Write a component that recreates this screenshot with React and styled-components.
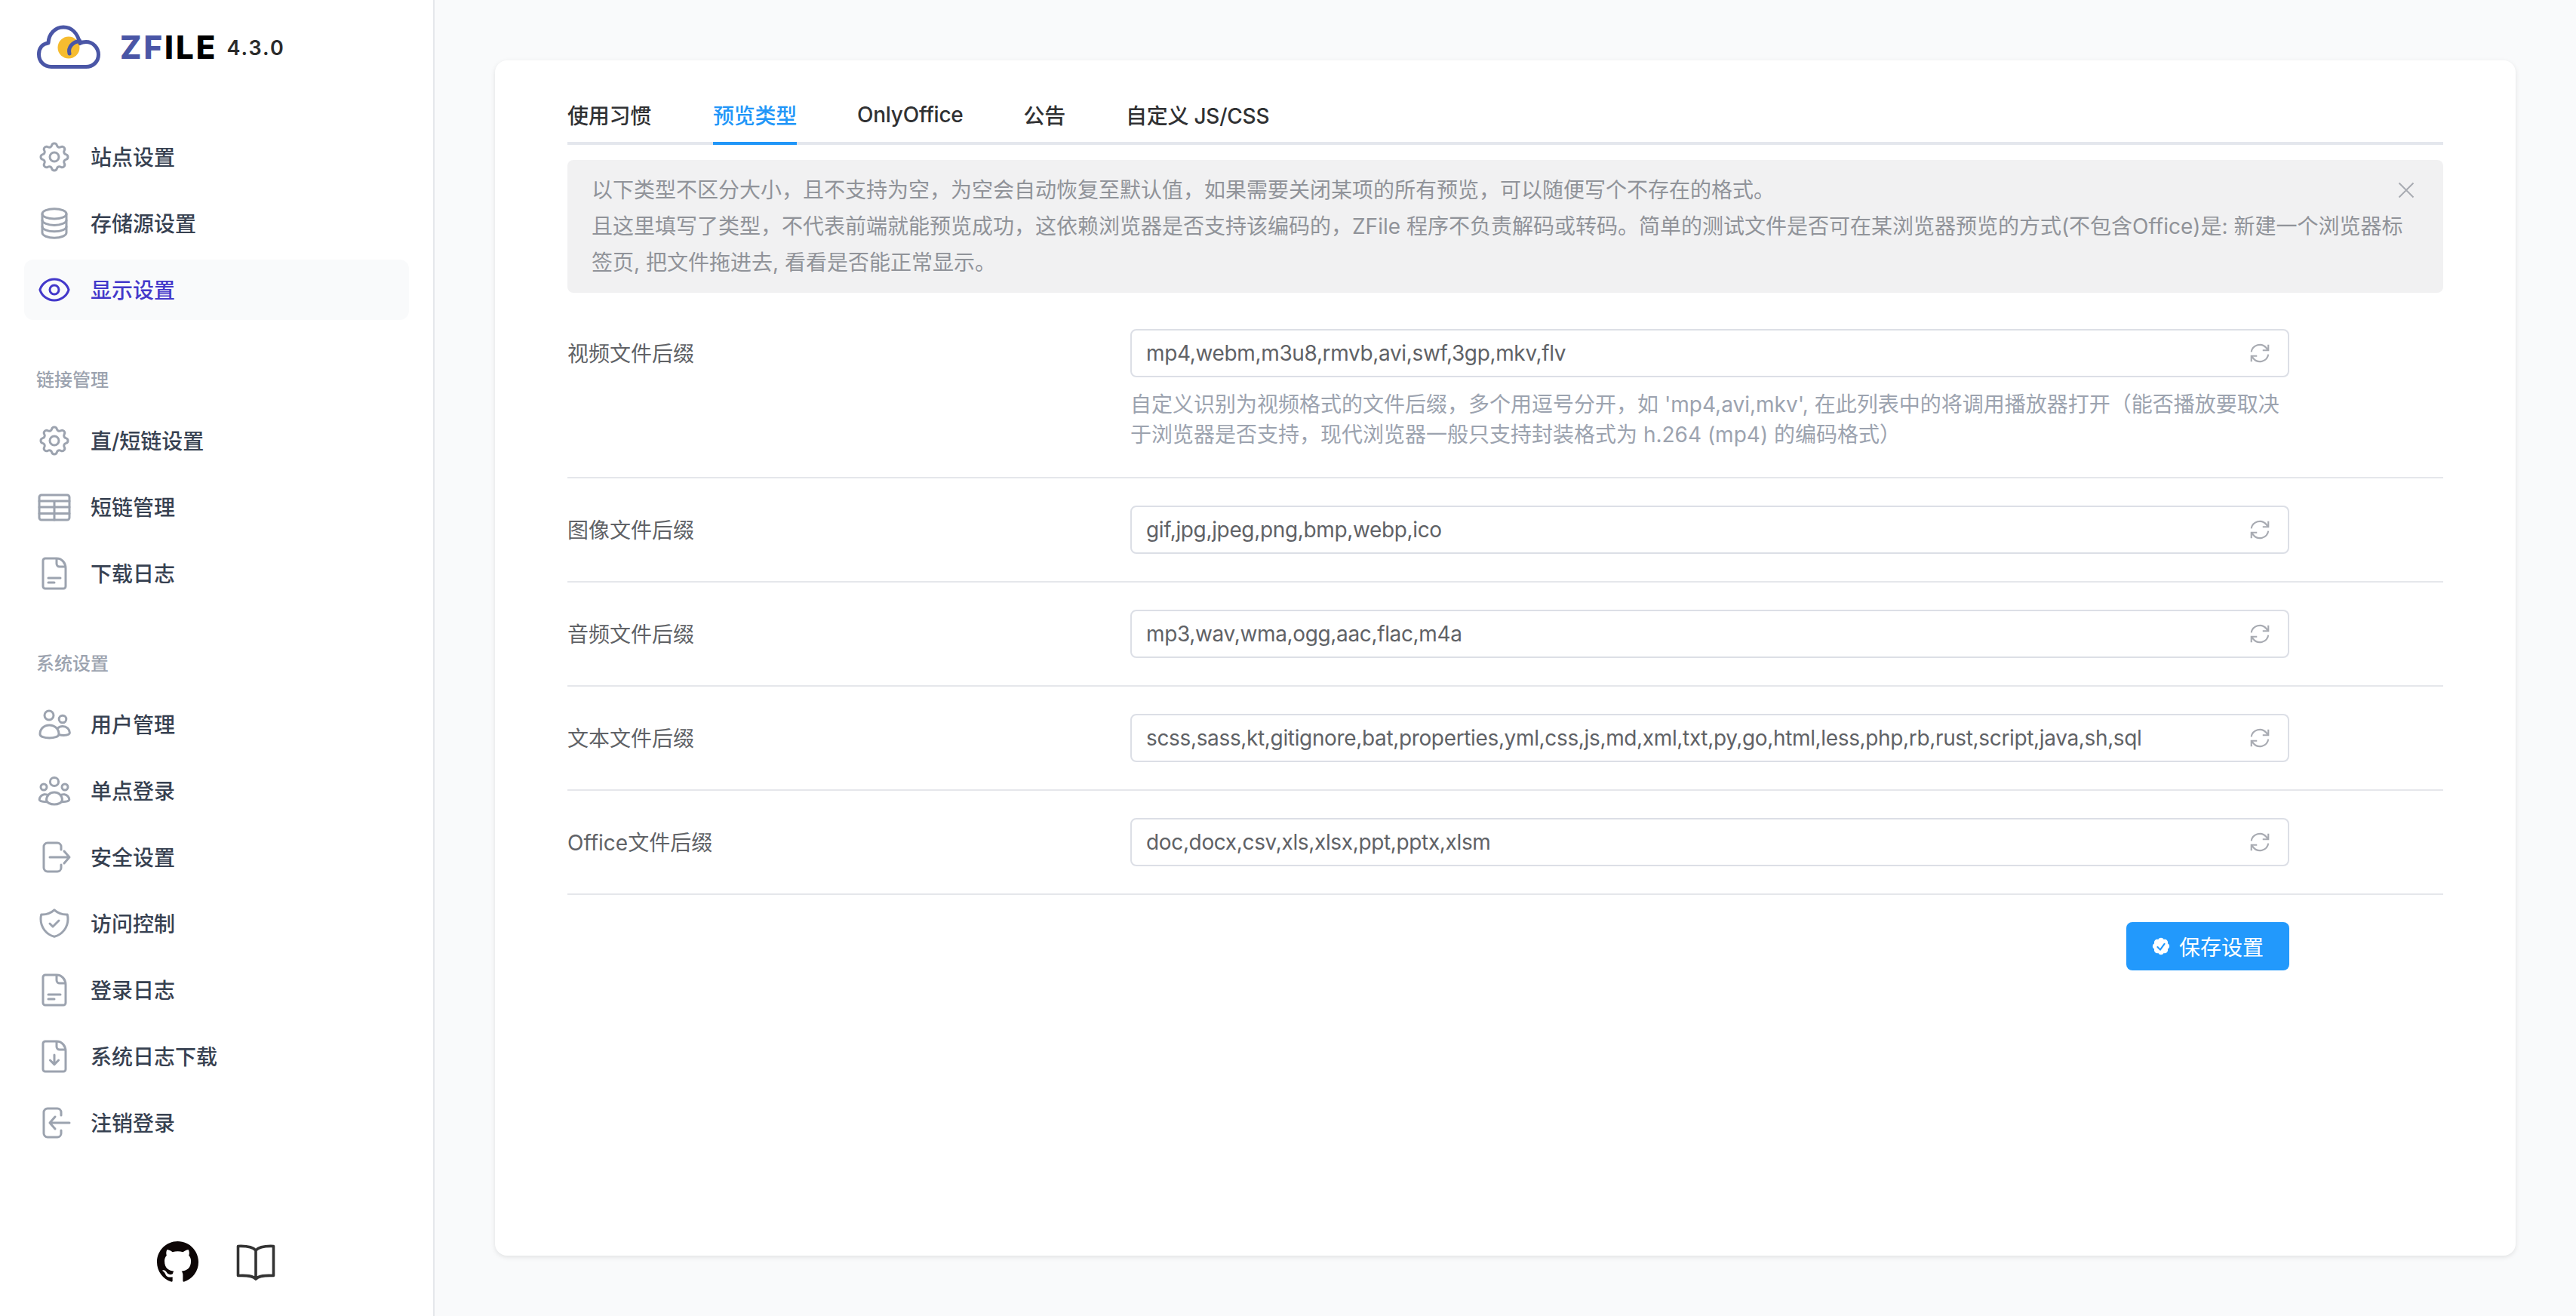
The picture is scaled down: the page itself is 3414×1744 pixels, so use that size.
import React from "react";
import styled, { createGlobalStyle } from "styled-components";
import { BsGithub } from "react-icons/bs";

const GlobalStyle = createGlobalStyle`
  html, body {
    margin: 0;
    padding: 0;
    height: 100%;
  }
  body {
    font-family: Inter, "Noto Sans CJK SC", sans-serif;
    background: #f9fafb;
  }
  * {
    box-sizing: border-box;
  }
`;

const FONT = `Inter, "Noto Sans CJK SC", sans-serif`;

// Icons, all on a 24 grid
const Icon = ({ children }) => (
  <NavSvg viewBox="0 0 24 24" fill="none" stroke="currentColor" strokeWidth="1.5" strokeLinecap="round" strokeLinejoin="round">
    {children}
  </NavSvg>
);

const CogIcon = () => (
  <Icon>
    <path d="M10.325 4.317c.426-1.756 2.924-1.756 3.35 0a1.724 1.724 0 002.573 1.066c1.543-.94 3.31.826 2.37 2.37a1.724 1.724 0 001.065 2.572c1.756.426 1.756 2.924 0 3.35a1.724 1.724 0 00-1.066 2.573c.94 1.543-.826 3.31-2.37 2.37a1.724 1.724 0 00-2.572 1.065c-.426 1.756-2.924 1.756-3.35 0a1.724 1.724 0 00-2.573-1.066c-1.543.94-3.31-.826-2.37-2.37a1.724 1.724 0 00-1.065-2.572c-1.756-.426-1.756-2.924 0-3.35a1.724 1.724 0 001.066-2.573c-.94-1.543.826-3.31 2.37-2.37.996.608 2.296.07 2.572-1.065z" />
    <circle cx="12" cy="12" r="3" />
  </Icon>
);
const DatabaseIcon = () => (
  <Icon>
    <ellipse cx="12" cy="5.700" rx="8" ry="3.300" />
    <path d="M4 5.700v12.600c0 1.800 3.600 3.300 8 3.300s8-1.500 8-3.300V5.700" />
    <path d="M4 9.900c0 1.800 3.600 3.300 8 3.300s8-1.500 8-3.300M4 14.100c0 1.800 3.600 3.300 8 3.300s8-1.500 8-3.300" />
  </Icon>
);
const EyeIcon = () => (
  <Icon>
    <circle cx="12" cy="12" r="3" />
    <path d="M2.460 12C3.730 7.940 7.520 5 12 5s8.270 2.940 9.540 7c-1.270 4.060-5.060 7-9.540 7s-8.270-2.940-9.540-7z" />
  </Icon>
);
const TableIcon = () => (
  <Icon>
    <rect x="2" y="4" width="20" height="16.500" rx="1.500" />
    <path d="M2 8h20M2 12h20M2 16.200h20M12 8v12.500" />
  </Icon>
);
const DOC = "M13.500 2H6a1.500 1.500 0 00-1.500 1.500v17A1.500 1.500 0 006 22h12a1.500 1.500 0 001.500-1.500V8.500c0-3.500-2.500-6.500-6-6.500zM13.500 2v3.500a2 2 0 002 2h4";
const DocIcon = () => (
  <Icon>
    <path d={DOC} />
    <path d="M8 15h8M8 18h4" />
  </Icon>
);
const DocDownIcon = () => (
  <Icon>
    <path d={DOC} />
    <path d="M12 11v6M9.200 14.500L12 17.300l2.800-2.800" />
  </Icon>
);
const UsersIcon = () => (
  <Icon>
    <circle cx="8.500" cy="6" r="3" />
    <circle cx="17.500" cy="8.500" r="2.400" />
    <path d="M2.500 18.500c0-3.500 2.500-6 6.200-6s6.300 2.500 6.300 6c0 1.600-3 2.500-6.300 2.500s-6.200-.9-6.200-2.500z" />
    <path d="M14.200 14.600c.8-.8 2-1.300 3.300-1.300 2.700 0 4.700 2 4.700 4.200 0 1.100-2 1.600-4 1.700-.9 0-2-.1-3-.4" />
  </Icon>
);
const GroupIcon = () => (
  <Icon>
    <circle cx="12" cy="6" r="2.800" />
    <circle cx="5" cy="9.500" r="2" />
    <circle cx="19" cy="9.500" r="2" />
    <path d="M6.800 18c0-2.900 2.300-5 5.200-5s5.200 2.100 5.200 5c0 1.800-2.500 3-5.200 3s-5.200-1.200-5.200-3z" />
    <path d="M7.300 14.600c-.6-.2-1.300-.3-2-.2-1.800.3-3.200 1.900-3.200 3.500 0 .8 2 1.400 4.800 1.500M16.700 14.600c.6-.2 1.300-.3 2-.2 1.800.3 3.200 1.900 3.200 3.500 0 .8-2 1.400-4.800 1.500" />
  </Icon>
);
const ExitIcon = () => (
  <Icon>
    <path d="M16.500 7V5A2.500 2.500 0 0014 2.500H7.500A2.500 2.500 0 005 5v14a2.500 2.500 0 002.500 2.500H14a2.500 2.500 0 002.500-2.500v-2" />
    <path d="M9 12h13M18.500 8l3.500 4-3.500 4" />
  </Icon>
);
const EnterIcon = () => (
  <Icon>
    <path d="M16.500 7V5A2.500 2.500 0 0014 2.500H7.500A2.500 2.500 0 005 5v14a2.500 2.500 0 002.500 2.500H14a2.500 2.500 0 002.500-2.500v-2" />
    <path d="M22 12H9M12.500 8L9 12l3.500 4" />
  </Icon>
);
const ShieldIcon = () => (
  <Icon>
    <path d="M9 12l2 2 4-4m5.618-4.016A11.955 11.955 0 0112 2.944a11.955 11.955 0 01-8.618 3.040A12.020 12.020 0 003 9c0 5.591 3.824 10.290 9 11.622 5.176-1.332 9-6.030 9-11.622 0-1.042-.133-2.052-.382-3.016z" />
  </Icon>
);

const RefreshIcon = () => (
  <RefreshSvg viewBox="0 0 28 28" fill="none" stroke="currentColor" strokeWidth="2">
    <path d="M3.500 12.500A10.500 10.500 0 0122 7.500l2 2.500" />
    <path d="M24.500 3.500v7h-7" />
    <path d="M24.500 15.500A10.500 10.500 0 016 20.500L4 18" />
    <path d="M3.500 24.500v-7h7" />
  </RefreshSvg>
);

const CloudLogo = () => (
  <svg width="84" height="60" viewBox="0 0 84 60" fill="none">
    <circle cx="42" cy="30" r="14.500" fill="#f6bc2f" />
    <path
      d="M19 55.500h46c9.500 0 16.500-7 16.500-16 0-9.500-7.500-17-16.500-17-3 0-6 .7-8 2C54 11 46 3 35 3 24 3 15.500 12 15 24 7 25 2.500 31 2.500 39c0 9.500 7 16.500 16.500 16.500z"
      stroke="#4a56a6"
      strokeWidth="5"
      strokeLinejoin="round"
    />
    <path d="M43 38c-2-8 4-16 14-16.500" stroke="#4a56a6" strokeWidth="5" strokeLinecap="round" />
  </svg>
);

const BookIcon = () => (
  <svg width="52" height="48" viewBox="0 0 52 48" fill="none" stroke="#333" strokeWidth="3.600" strokeLinejoin="round">
    <path d="M26 8C22 3.500 14 2 2.500 2.500v39C14 41 22 41.500 26 46c4-4.500 12-5 23.500-4.500v-39C38 2 30 3.500 26 8zM26 8v38" />
  </svg>
);

const CheckBadge = () => (
  <svg width="28" height="28" viewBox="0 0 20 20" fill="#fff">
    <path
      fillRule="evenodd"
      clipRule="evenodd"
      d="M16.403 12.652a3 3 0 000-5.304 3 3 0 00-3.750-3.751 3 3 0 00-5.305 0 3 3 0 00-3.751 3.750 3 3 0 000 5.305 3 3 0 003.750 3.751 3 3 0 005.305 0 3 3 0 003.751-3.750zm-2.546-4.460a.75.75 0 00-1.214-.883l-3.483 4.790-1.880-1.880a.75.75 0 10-1.060 1.061l2.500 2.500a.75.75 0 001.137-.089l4-5.500z"
    />
  </svg>
);

const CloseIcon = () => (
  <svg width="22" height="22" viewBox="0 0 22 22" fill="none" stroke="#a8abb2" strokeWidth="2">
    <path d="M1.500 1.500l19 19M20.500 1.500l-19 19" />
  </svg>
);

// Data
const topItems = [
  { label: "站点设置", icon: <CogIcon /> },
  { label: "存储源设置", icon: <DatabaseIcon /> },
  { label: "显示设置", icon: <EyeIcon />, active: true },
];
const linkItems = [
  { label: "直/短链设置", icon: <CogIcon /> },
  { label: "短链管理", icon: <TableIcon /> },
  { label: "下载日志", icon: <DocIcon /> },
];
const systemItems = [
  { label: "用户管理", icon: <UsersIcon /> },
  { label: "单点登录", icon: <GroupIcon /> },
  { label: "安全设置", icon: <ExitIcon /> },
  { label: "访问控制", icon: <ShieldIcon /> },
  { label: "登录日志", icon: <DocIcon /> },
  { label: "系统日志下载", icon: <DocDownIcon /> },
  { label: "注销登录", icon: <EnterIcon /> },
];
const tabs = ["使用习惯", "预览类型", "OnlyOffice", "公告", "自定义 JS/CSS"];
const rows = [
  {
    label: "视频文件后缀",
    value: "mp4,webm,m3u8,rmvb,avi,swf,3gp,mkv,flv",
    hint: "自定义识别为视频格式的文件后缀，多个用逗号分开，如 'mp4,avi,mkv', 在此列表中的将调用播放器打开（能否播放要取决于浏览器是否支持，现代浏览器一般只支持封装格式为 h.264 (mp4) 的编码格式）",
  },
  { label: "图像文件后缀", value: "gif,jpg,jpeg,png,bmp,webp,ico" },
  { label: "音频文件后缀", value: "mp3,wav,wma,ogg,aac,flac,m4a" },
  {
    label: "文本文件后缀",
    value: "scss,sass,kt,gitignore,bat,properties,yml,css,js,md,xml,txt,py,go,html,less,php,rb,rust,script,java,sh,sql",
  },
  { label: "Office文件后缀", value: "doc,docx,csv,xls,xlsx,ppt,pptx,xlsm" },
];

const NavList = ({ items }) => (
  <NavGroup>
    {items.map((item) => (
      <NavItem key={item.label} $active={item.active}>
        {item.icon}
        <NavLabel>{item.label}</NavLabel>
      </NavItem>
    ))}
  </NavGroup>
);

export default function App() {
  return (
    <Layout>
      <GlobalStyle />
      <Sidebar>
        <Brand>
          <CloudLogo />
          <BrandName>
            <BrandAccent>ZF</BrandAccent>ILE
          </BrandName>
          <BrandVersion>4.3.0</BrandVersion>
        </Brand>
        <Nav>
          <NavList items={topItems} />
          <SectionTitle>链接管理</SectionTitle>
          <NavList items={linkItems} />
          <SectionTitle>系统设置</SectionTitle>
          <NavList items={systemItems} />
        </Nav>
        <SidebarFooter>
          <BsGithub size={55} color="#0d0606" />
          <BookIcon />
        </SidebarFooter>
      </Sidebar>
      <Main>
        <Card>
          <TabBar>
            {tabs.map((tab) => (
              <Tab key={tab} $active={tab === "预览类型"}>
                {tab}
              </Tab>
            ))}
          </TabBar>
          <Alert>
            <AlertText>
              以下类型不区分大小，且不支持为空，为空会自动恢复至默认值，如果需要关闭某项的所有预览，可以随便写个不存在的格式。
              <br />
              且这里填写了类型，不代表前端就能预览成功，这依赖浏览器是否支持该编码的，ZFile 程序不负责解码或转码。简单的测试文件是否可在某浏览器预览的方式(不包含Office)是: 新建一个浏览器标签页, 把文件拖进去, 看看是否能正常显示。
            </AlertText>
            <AlertClose>
              <CloseIcon />
            </AlertClose>
          </Alert>
          <Form>
            {rows.map((row) => (
              <Row key={row.label}>
                <RowLabel>{row.label}</RowLabel>
                <RowField>
                  <InputBox>
                    <InputValue>{row.value}</InputValue>
                    <RefreshIcon />
                  </InputBox>
                  {row.hint && <Hint>{row.hint}</Hint>}
                </RowField>
              </Row>
            ))}
          </Form>
          <Actions>
            <SaveButton>
              <CheckBadge />
              保存设置
            </SaveButton>
          </Actions>
        </Card>
      </Main>
    </Layout>
  );
}

const Layout = styled.div`
  display: flex;
  width: 100%;
  height: 1744px;
  overflow: hidden;
  font-family: ${FONT};
`;

const Sidebar = styled.aside`
  display: flex;
  flex-direction: column;
  flex: 0 0 576px;
  background: #fff;
  border-right: 2px solid #e5e7eb;
`;

const Brand = styled.div`
  display: flex;
  align-items: center;
  height: 168px;
  padding: 0 0 42px 49px;
`;

const BrandName = styled.div`
  margin-left: 26px;
  font-size: 42px;
  font-weight: 800;
  letter-spacing: 3px;
  line-height: 1;
  color: #000;
`;

const BrandAccent = styled.span`
  color: #4a56a6;
`;

const BrandVersion = styled.div`
  margin-left: 12px;
  font-size: 27px;
  font-weight: 600;
  letter-spacing: 2px;
  line-height: 1;
  color: #2b2b2b;
`;

const Nav = styled.nav`
  padding: 0 32px;
`;

const NavGroup = styled.div`
  display: flex;
  flex-direction: column;
  gap: 8px;
`;

const NavItem = styled.a`
  display: flex;
  align-items: center;
  gap: 24px;
  height: 80px;
  padding: 0 16px;
  border-radius: 12px;
  font-size: 28px;
  font-weight: 500;
  color: ${(p) => (p.$active ? "#4338ca" : "#374151")};
  background: ${(p) => (p.$active ? "#f9fafb" : "transparent")};

  svg {
    color: ${(p) => (p.$active ? "#4338ca" : "#9ca3af")};
  }
`;

const NavLabel = styled.span`
  padding-bottom: 2px;
`;

const NavSvg = styled.svg`
  flex: none;
  width: 48px;
  height: 48px;
`;

const SectionTitle = styled.div`
  margin: 64px 0 24px;
  padding-left: 16px;
  font-size: 24px;
  font-weight: 500;
  line-height: 32px;
  color: #9ca3af;
`;

const SidebarFooter = styled.div`
  display: flex;
  align-items: center;
  justify-content: center;
  gap: 50px;
  margin-top: auto;
  padding: 0 2px 44px 0;
`;

const Main = styled.main`
  flex: 1;
  min-width: 0;
  padding: 80px;
  background: #f9fafb;
`;

const Card = styled.section`
  height: 100%;
  padding: 28px 96px;
  background: #fff;
  border-radius: 16px;
  box-shadow: 0 2px 6px rgba(0, 0, 0, 0.1);
`;

const TabBar = styled.div`
  display: flex;
  border-bottom: 4px solid #e4e7ed;
  margin-bottom: 20px;
`;

const Tab = styled.div`
  position: relative;
  display: flex;
  align-items: center;
  height: 80px;
  padding: 8px 40px 0;
  font-size: 28px;
  font-weight: 500;
  letter-spacing: -0.25px;
  color: ${(p) => (p.$active ? "#2196f8" : "#303133")};

  &:first-child {
    padding-left: 0;
    padding-right: 42px;
  }

  ${(p) =>
    p.$active &&
    `
    &::after {
      content: "";
      position: absolute;
      left: 40px;
      right: 40px;
      bottom: -4px;
      height: 4px;
      background: #2196f8;
    }
  `}
`;

const Alert = styled.div`
  position: relative;
  padding: 16px 32px;
  margin-bottom: 12px;
  background: #f1f1f2;
  border-radius: 8px;
`;

const AlertText = styled.p`
  margin: 0;
  max-width: 2404px;
  font-size: 28px;
  line-height: 48px;
  color: #909399;
`;

const AlertClose = styled.div`
  position: absolute;
  top: 29px;
  right: 38px;
  line-height: 0;
`;

const Form = styled.div`
  display: flex;
  flex-direction: column;
`;

const Row = styled.div`
  display: flex;
  padding: 36px 0;
  border-bottom: 2px solid #e5e7eb;
`;

const RowLabel = styled.div`
  flex: 0 0 746px;
  height: 64px;
  font-size: 28px;
  line-height: 66px;
  color: #606266;
`;

const RowField = styled.div`
  width: 1536px;
`;

const InputBox = styled.div`
  display: flex;
  align-items: center;
  justify-content: space-between;
  height: 64px;
  padding: 0 22px 0 19px;
  background: #fff;
  border: 2px solid #dcdfe6;
  border-radius: 8px;
`;

const InputValue = styled.span`
  font-size: 28px;
  letter-spacing: -0.35px;
  color: #606266;
`;

const RefreshSvg = styled.svg`
  flex: none;
  width: 30px;
  height: 30px;
  color: #a8abb2;
`;

const Hint = styled.div`
  margin-top: 16px;
  font-size: 28px;
  line-height: 40px;
  color: #9ca3af;
`;

const Actions = styled.div`
  display: flex;
  justify-content: flex-end;
  width: 2282px;
  padding-top: 36px;
`;

const SaveButton = styled.button`
  display: flex;
  align-items: center;
  gap: 10px;
  height: 64px;
  padding: 0 34px 0 32px;
  border: none;
  border-radius: 8px;
  background: #2299fc;
  color: #fff;
  font-family: ${FONT};
  font-size: 28px;
`;
